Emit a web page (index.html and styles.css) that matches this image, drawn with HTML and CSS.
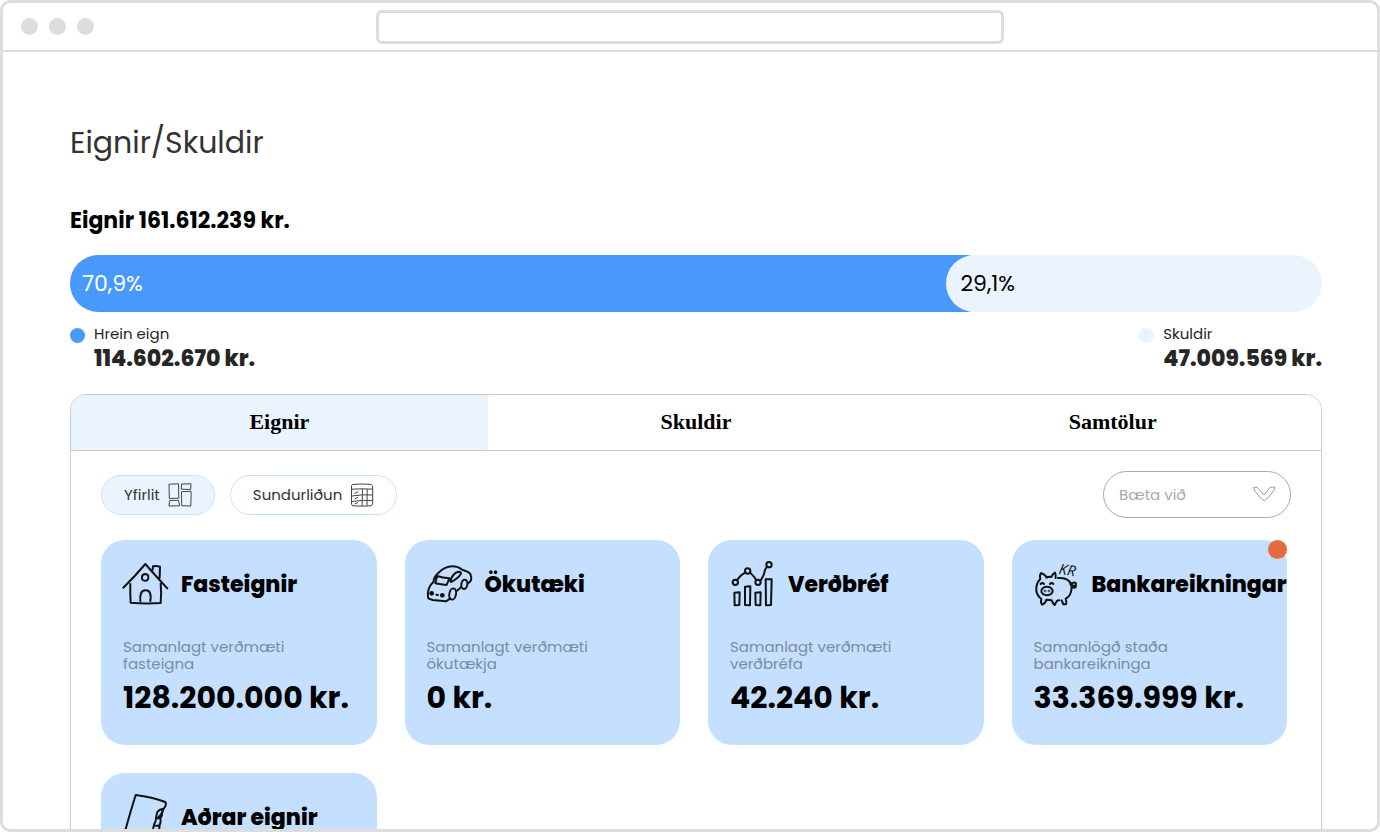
FILE: index.html
```html
<!DOCTYPE html>
<html lang="is">
<head>
<meta charset="utf-8">
<meta name="viewport" content="width=device-width, initial-scale=1">
<title>Eignir/Skuldir</title>
<link rel="stylesheet" href="styles.css">
</head>
<body>
<div class="window">
  <header class="window-bar">
    <div class="window-dots"><span class="dot"></span><span class="dot"></span><span class="dot"></span></div>
    <input class="address" type="text" aria-label="Veffang">
  </header>
  <main class="page">
    <h1 class="page-title">Eignir/Skuldir</h1>
    <h2 class="total">Eignir 161.612.239 kr.</h2>
    <div class="ratio">
      <div class="ratio-net">70,9%</div>
      <div class="ratio-debt">29,1%</div>
    </div>
    <div class="legend">
      <div class="legend-item">
        <span class="legend-mark legend-mark-net"></span>
        <div><p class="legend-label">Hrein eign</p><p class="legend-value">114.602.670 kr.</p></div>
      </div>
      <div class="legend-item">
        <span class="legend-mark legend-mark-debt"></span>
        <div><p class="legend-label">Skuldir</p><p class="legend-value">47.009.569 kr.</p></div>
      </div>
    </div>

    <section class="panel">
      <nav class="tabs">
        <button class="tab tab-active" type="button">Eignir</button>
        <button class="tab" type="button">Skuldir</button>
        <button class="tab" type="button">Samtölur</button>
      </nav>
      <div class="toolbar">
        <button class="pill pill-active" type="button">Yfirlit
          <svg class="pill-icon" viewBox="0 0 24 24" aria-hidden="true"><path d="M1 1.2 10.500 .8 10.800 15.200 1.300 15.500ZM13.500 1 23 .8 22.700 6.500 13.300 6.200ZM13.500 8.600 23.200 8.300 22.800 23 13.700 22.800ZM1.500 17.500 10.500 17.300 11.600 22.800 1 23Z"/></svg>
        </button>
        <button class="pill" type="button">Sundurliðun
          <svg class="pill-icon" viewBox="0 0 24 24" aria-hidden="true"><path d="M2.500 1.500Q12 .6 21 1.300Q23.300 2 22.700 6V19Q23 22.500 21 22.800Q12 23.500 3 22.800Q1 22.500 1.500 19V4Q1 2 2.500 1.500ZM1.500 6.200Q12 5.400 22.700 6.200M2 13Q12 11.200 22.500 12M2 18.500Q12 16.700 22.500 17.500M12.500 6 12 22.800M17.200 6 17 22.800M4.500 10.500 8 8.800M4.500 16 8 14.300M4.500 21 8 19.500"/></svg>
        </button>
        <div class="add">
          <select class="add-select" aria-label="Bæta við"><option>Bæta við</option></select>
          <svg class="add-icon" viewBox="0 0 24 16" aria-hidden="true"><path d="M1.500 1.600Q4 .8 5.500 1.500Q8 5 12 9Q15 5.500 18 1.400Q20.500 .8 23 1.400Q23 3.500 20 7Q16 12 12.500 14.800Q10 14 6.500 9.700Q2 5 1.500 1.600Z"/></svg>
        </div>
      </div>
      <div class="cards">
        <article class="card">
          <div class="card-head">
            <svg class="card-icon" viewBox="27 30 135 135" aria-hidden="true"><path d="M28 113Q62 80 94 42Q126 79 160 115M49 102Q48 130 50 158Q95 162 140 159Q143 130 140 101M116 59 117 49Q127 47 138 50L137 83M79 153Q76 121 95 121Q114 121 109 153M93 72Q104 72 103 82Q103 93 93 92Q83 92 84 82Q84 73 93 72"/></svg>
            <h3 class="card-title">Fasteignir</h3>
          </div>
          <p class="card-text">Samanlagt verðmæti fasteigna</p>
          <p class="card-value">128.200.000 kr.</p>
        </article>
        <article class="card">
          <div class="card-head">
            <svg class="card-icon" viewBox="22 30 135 135" aria-hidden="true"><path d="M26 145Q22 130 29 112Q34 102 41 96Q43 80 56 69Q76 49 98 49Q115 49 127 59L138 63Q152 67 154 78Q158 92 145 100M112 122 124 112M26 145 39 150 79 154 91 146M52 78Q69 83 89 85L81 105Q64 104 47 100ZM92 93Q98 70 116 65Q127 65 123 73Q115 86 94 96"/><ellipse cx="99" cy="132" rx="10" ry="17" transform="rotate(10 99 132)"/><ellipse cx="134" cy="103" rx="9" ry="14" transform="rotate(10 134 103)"/><circle cx="36" cy="130" r="4"/><circle cx="68" cy="136" r="4"/><path d="M33 130H39M65 136H71M50 134 55 135"/></svg>
            <h3 class="card-title">Ökutæki</h3>
          </div>
          <p class="card-text">Samanlagt verðmæti ökutækja</p>
          <p class="card-value">0 kr.</p>
        </article>
        <article class="card">
          <div class="card-head">
            <svg class="card-icon" viewBox="27 30 135 135" aria-hidden="true"><circle cx="43" cy="97" r="8"/><circle cx="80" cy="63" r="8"/><circle cx="111" cy="97" r="8"/><circle cx="144" cy="44" r="8"/><path d="M48 90Q58 75 73 67M87 67Q98 78 106 90M118 93Q130 75 132 60Q135 52 139 50M40 128 56 127 55 165 41 166ZM72 110 88 109 87 166 72 165ZM103 128 119 127 118 166 104 165ZM134 88 152 88 150 165 135 166Z"/></svg>
            <h3 class="card-title">Verðbréf</h3>
          </div>
          <p class="card-text">Samanlagt verðmæti verðbréfa</p>
          <p class="card-value">42.240 kr.</p>
        </article>
        <article class="card">
          <span class="card-badge"></span>
          <div class="card-head">
            <svg class="card-icon" viewBox="26 30 135 135" aria-hidden="true"><path d="M45 87Q42 76 47 69Q56 72 63 80M63 83Q72 79 78 81Q81 72 89 68Q92 76 91 84M98 84Q120 82 131 93Q141 105 138 121Q135 139 121 146Q125 160 121 163L114 163 109 151M102 151 95 152 88 165Q82 160 79 151L63 149Q61 160 51 164Q45 159 48 147Q30 132 33 112Q35 96 45 87M135 103Q146 94 151 99Q154 105 147 108Q139 110 141 100M140 111Q150 117 152 108M46 102Q51 96 56 102M74 102Q79 96 84 102"/><ellipse cx="65" cy="123" rx="17" ry="13"/><circle cx="59" cy="123" r="1"/><circle cx="71" cy="123" r="1"/><text class="icon-text" x="99" y="71" transform="rotate(10 99 71)">KR</text></svg>
            <h3 class="card-title">Bankareikningar</h3>
          </div>
          <p class="card-text">Samanlögð staða bankareikninga</p>
          <p class="card-value">33.369.999 kr.</p>
        </article>
        <article class="card">
          <div class="card-head">
            <svg class="card-icon" viewBox="372 159 135 135" aria-hidden="true"><path d="M376 282Q392 222 410 165Q460 171 499 186Q504 194 494 206Q480 208 475 216Q471 228 470 243Q460 258 462 286M494 206Q488 224 478 232M490 212Q491 226 484 235L473 234M484 236Q487 248 480 257L469 257M482 257 478 282M376 282 462 288"/></svg>
            <h3 class="card-title">Aðrar eignir</h3>
          </div>
        </article>
      </div>
    </section>
  </main>
</div>
</body>
</html>
```
FILE: styles.css
```css
* { box-sizing: border-box; }
body { margin: 0; background: #fff; color: #000; font-family: Poppins, Inter, "Noto Sans", sans-serif; }
h1, h2, h3, p { margin: 0; }
button, input, select { font: inherit; color: inherit; margin: 0; }

.window { display: flex; flex-direction: column; height: 100vh; border: 3px solid #ddd; border-radius: 10px; overflow: hidden; }
.window-bar { display: grid; grid-template-columns: 1fr 47% 1fr; align-items: center; flex: none; height: 49px; padding: 0 18px; border-bottom: 2px solid #ddd; }
.window-dots { display: flex; gap: 11px; }
.dot { width: 17px; height: 17px; border-radius: 50%; background: #ddd; }
.address { width: 100%; height: 34px; padding: 0 12px; border: 3px solid #ddd; border-radius: 6px; background: #fff; font-size: 14px; }

.page { flex: 1; min-height: 0; overflow: hidden; padding: 67px 55px 0 67px; }
.page-title { font-size: 30px; line-height: 48px; font-weight: 400; color: #333; }
.total { margin-top: 36px; font-size: 22px; line-height: 36px; font-weight: 700; }

.ratio { display: flex; margin-top: 16px; height: 57px; border-radius: 29px; overflow: hidden; font-size: 22px; line-height: 57px; }
.ratio-net { flex: 1; padding-left: 12px; background: #4899fb; color: #fff; }
.ratio-debt { width: 30%; margin-left: -24px; padding-left: 14px; border-radius: 29px; background: #eaf4ff; }

.legend { display: flex; justify-content: space-between; margin-top: 11px; color: #262626; }
.legend-item { display: flex; gap: 9px; }
.legend-mark { width: 15px; height: 15px; margin-top: 5px; border-radius: 50%; }
.legend-mark-net { background: #4899fb; }
.legend-mark-debt { background: #eaf4ff; }
.legend-label { font-size: 15px; line-height: 22px; }
.legend-value { font-size: 22px; line-height: 27px; font-weight: 800; }

.panel { margin-top: 22px; border: 1px solid #ccc; border-radius: 16px; overflow: hidden; }
.tabs { display: grid; grid-template-columns: repeat(3, 1fr); border-bottom: 1px solid #ccc; }
.tab { height: 55px; padding: 0 0 2px; border: 0; background: #fff; font-family: "Liberation Serif", serif; font-size: 22px; font-weight: 700; }
.tab-active { background: #eaf4ff; }

.toolbar { display: flex; align-items: center; gap: 15px; padding: 20px 30px 0; }
.pill { display: flex; align-items: center; gap: 8px; height: 40px; padding: 0 22px; border: 1px solid #c9e2ff; border-radius: 20px; background: #fff; color: #333; font-size: 15px; font-weight: 400; }
.pill-active { background: #eaf4ff; }
.pill-icon { width: 24px; height: 24px; fill: none; stroke: #444; stroke-width: 1; }
.add { position: relative; width: 188px; margin-left: auto; }
.add-select { display: block; width: 100%; height: 47px; padding: 0 15px; border: 1px solid #aaa; border-radius: 24px; background: #fff; color: #aaa; font-size: 15px; appearance: none; }
.add-icon { position: absolute; right: 15px; top: 15px; width: 24px; height: 16px; fill: none; stroke: #999; stroke-width: 1; pointer-events: none; }

.cards { display: grid; grid-template-columns: repeat(4, minmax(0, 1fr)); gap: 28px; padding: 22px 34px 30px 30px; }
.card { position: relative; min-height: 205px; padding: 20px 22px; border-radius: 24px; background: #c4dfff; }
.card-head { display: flex; align-items: center; gap: 13px; height: 45px; white-space: nowrap; }
.card-icon { flex: none; width: 45px; height: 45px; overflow: visible; fill: none; stroke: #111; stroke-width: 6; stroke-linecap: round; stroke-linejoin: round; }
.icon-text { fill: #111; stroke: none; font-family: "Open Sans", sans-serif; font-size: 44px; font-style: italic; }
.card-title { padding-top: 4px; font-size: 22px; line-height: 32px; font-weight: 800; }
.card-text { max-width: 190px; margin-top: 33px; font-size: 15px; line-height: 17px; color: #7c8b9b; }
.card-value { margin-top: 6px; font-size: 30px; line-height: 40px; font-weight: 700; white-space: nowrap; }
.card-badge { position: absolute; top: 0; right: 0; width: 19px; height: 19px; border-radius: 50%; background: #e66a40; }
```
